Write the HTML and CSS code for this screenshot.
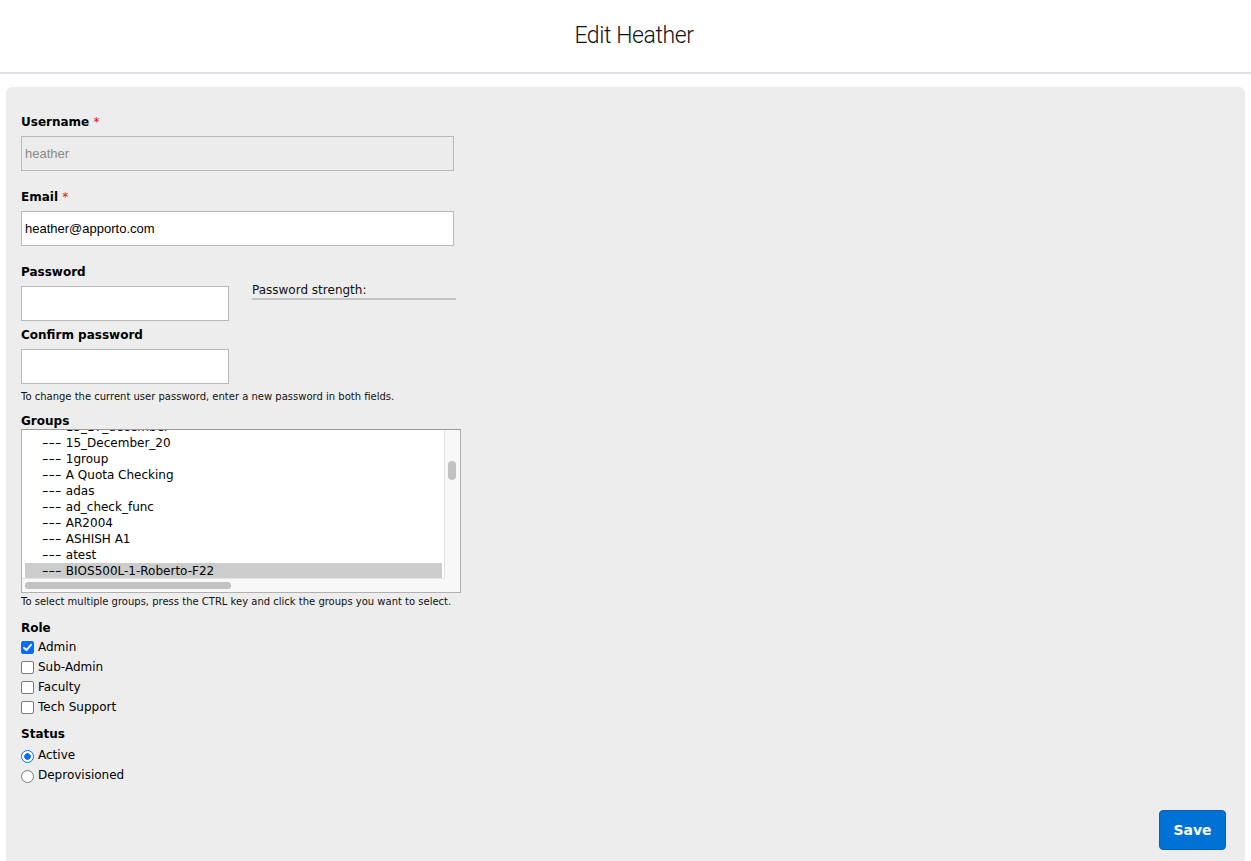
FILE: index.html
```html
<!DOCTYPE html>
<html lang="en">
<head>
<meta charset="utf-8">
<title>Edit Heather</title>
<link rel="stylesheet" href="styles.css">
</head>
<body>
<header class="topbar">
  <h1 class="title">Edit Heather</h1>
</header>
<main class="panel">
  <form class="form">
    <div class="field">
      <div class="label">Username <span class="req">*</span></div>
      <div class="input input-wide input-disabled">heather</div>
    </div>
    <div class="field">
      <div class="label">Email <span class="req">*</span></div>
      <div class="input input-wide">heather@apporto.com</div>
    </div>
    <div class="field field-pw">
      <div class="label">Password</div>
      <div class="pw-row">
        <div class="input input-short"></div>
        <div class="strength">
          <div class="strength-text">Password strength:</div>
          <div class="strength-bar"></div>
        </div>
      </div>
    </div>
    <div class="field field-confirm">
      <div class="label">Confirm password</div>
      <div class="input input-short"></div>
      <div class="help">To change the current user password, enter a new password in both fields.</div>
    </div>
    <div class="field field-groups">
      <div class="label label-tight">Groups</div>
      <div class="listbox">
        <div class="list">
          <div class="list-inner">
            <div class="opt opt-clipped"><span class="dash">---</span> 15_17_december</div>
            <div class="opt"><span class="dash">---</span> 15_December_20</div>
            <div class="opt"><span class="dash">---</span> 1group</div>
            <div class="opt"><span class="dash">---</span> A Quota Checking</div>
            <div class="opt"><span class="dash">---</span> adas</div>
            <div class="opt"><span class="dash">---</span> ad_check_func</div>
            <div class="opt"><span class="dash">---</span> AR2004</div>
            <div class="opt"><span class="dash">---</span> ASHISH A1</div>
            <div class="opt"><span class="dash">---</span> atest</div>
            <div class="opt opt-selected"><span class="dash">---</span> BIOS500L-1-Roberto-F22</div>
          </div>
        </div>
        <div class="vscroll"><div class="vthumb"></div></div>
        <div class="hscroll"><div class="hthumb"></div></div>
        <div class="corner"></div>
      </div>
      <div class="help">To select multiple groups, press the CTRL key and click the groups you want to select.</div>
    </div>
    <div class="field field-role">
      <div class="label label-opts">Role</div>
      <div class="opts">
        <div class="check-row"><span class="cb cb-on"><svg viewBox="0 0 13 13" width="13" height="13"><path d="M3 6.8 L5.4 9.2 L10 3.8" fill="none" stroke="#fff" stroke-width="1.9" stroke-linecap="round" stroke-linejoin="round"/></svg></span><span>Admin</span></div>
        <div class="check-row"><span class="cb"></span><span>Sub-Admin</span></div>
        <div class="check-row"><span class="cb"></span><span>Faculty</span></div>
        <div class="check-row"><span class="cb"></span><span>Tech Support</span></div>
      </div>
    </div>
    <div class="field field-status">
      <div class="label label-opts">Status</div>
      <div class="opts">
        <div class="check-row"><span class="rb rb-on"></span><span>Active</span></div>
        <div class="check-row"><span class="rb"></span><span>Deprovisioned</span></div>
      </div>
    </div>
    <div class="actions">
      <button type="button" class="btn-save">Save</button>
    </div>
  </form>
</main>
</body>
</html>
```
FILE: styles.css
```css
html, body {
  margin: 0;
  padding: 0;
  background: #ffffff;
}
body {
  font-family: "DejaVu Sans", "Noto Sans", sans-serif;
  color: #000;
}
.topbar {
  height: 72px;
  border-bottom: 2px solid #dde0e5;
  display: flex;
  align-items: center;
  justify-content: center;
  padding-left: 17px;
  box-sizing: content-box;
}
.title {
  margin: 0 0 2px 0;
  font-family: Roboto, "Liberation Sans", sans-serif;
  font-weight: 300;
  font-size: 23px;
  letter-spacing: -0.4px;
  color: #111;
}
.panel {
  margin: 13px 6px 0 6px;
  background: #ededed;
  border-radius: 6px 6px 0 0;
  padding: 27px 19px 11px 15px;
}
.form {
  display: flex;
  flex-direction: column;
}
.field {
  display: flex;
  flex-direction: column;
  margin-bottom: 18px;
}
.label {
  font-weight: bold;
  font-size: 12px;
  line-height: 16px;
  margin-bottom: 6px;
}
.label-tight {
  line-height: 15px;
  margin-bottom: 0;
}
.label-opts {
  line-height: 15px;
  margin-bottom: 1px;
}
.req {
  color: #e0101a;
  font-weight: normal;
}
.input {
  box-sizing: border-box;
  height: 35px;
  border: 1px solid #b9b9b9;
  background: #fff;
  font-family: "Liberation Sans", Arial, sans-serif;
  font-size: 13px;
  line-height: 33px;
  padding-left: 3px;
  color: #000;
}
.input-wide { width: 433px; }
.input-short { width: 208px; }
.input-disabled {
  background: #ececec;
  color: #8a8a8a;
}
.field-pw { margin-bottom: 6px; }
.pw-row {
  display: flex;
  align-items: flex-start;
  gap: 23px;
}
.strength {
  width: 204px;
  margin-top: -3px;
}
.strength-text {
  font-size: 12px;
  line-height: 14px;
  color: #111;
}
.strength-bar {
  height: 2px;
  background: #c4c4c4;
  margin-top: 1px;
}
.field-confirm { margin-bottom: 11px; }
.help {
  font-size: 10px;
  line-height: 13px;
  margin-top: 6px;
  color: #111;
  white-space: nowrap;
}
.field-groups { margin-bottom: 13px; }
.field-groups .help { margin-top: 2px; }
.listbox {
  position: relative;
  box-sizing: border-box;
  width: 440px;
  height: 164px;
  border: 1px solid #b0b0b0;
  border-top-color: #9a9a9a;
  background: #f8f8f8;
  display: grid;
  grid-template-columns: 423px 15px;
  grid-template-rows: 149px 13px;
}
.list {
  background: #fff;
  overflow: hidden;
  border-right: 1px solid #e3e3e3;
  border-bottom: 1px solid #e3e3e3;
}
.list-inner {
  margin-top: -11px;
  padding-left: 3px;
}
.opt {
  height: 16px;
  line-height: 16px;
  font-size: 12px;
  padding-left: 17px;
  width: 417px;
  box-sizing: border-box;
  white-space: nowrap;
}
.dash {
  display: inline-block;
  transform: scaleX(1.5);
  transform-origin: left center;
  margin-right: 7px;
}
.opt-selected {
  background: #cccccc;
}
.vscroll {
  background: #f8f8f8;
  position: relative;
}
.vthumb {
  position: absolute;
  left: 3px;
  top: 31px;
  width: 8px;
  height: 19px;
  border-radius: 4px;
  background: #c2c2c2;
}
.hscroll {
  background: #f8f8f8;
  position: relative;
}
.hthumb {
  position: absolute;
  left: 3px;
  top: 3px;
  width: 206px;
  height: 7px;
  border-radius: 4px;
  background: #c2c2c2;
}
.corner { background: #f8f8f8; }
.field-role { margin-bottom: 10px; }
.field-status .label-opts { margin-bottom: 3px; }
.opts {
  display: flex;
  flex-direction: column;
}
.check-row {
  height: 20px;
  display: flex;
  align-items: center;
  font-size: 12px;
  gap: 4px;
}
.cb {
  box-sizing: border-box;
  width: 13px;
  height: 13px;
  border: 1px solid #7a7a7a;
  border-radius: 2px;
  background: #fff;
  display: inline-flex;
}
.cb-on {
  background: #0b6df0;
  border-color: #0b6df0;
}
.cb-on svg { margin: -1px; }
.rb {
  box-sizing: border-box;
  width: 13px;
  height: 13px;
  border: 1px solid #7a7a7a;
  border-radius: 50%;
  background: #fff;
  margin-top: 2px;
}
.rb-on {
  border: 1.5px solid #0b6df0;
  background: radial-gradient(circle, #0b6df0 0 3px, #fff 3.5px);
}
.field-status { margin-bottom: 0; }
.actions {
  display: flex;
  justify-content: flex-end;
  margin-top: 25px;
}
.btn-save {
  width: 67px;
  height: 40px;
  border-radius: 4px;
  border: 1px solid #0b5fb4;
  background: #0072d6;
  color: #fff;
  font-family: "DejaVu Sans", sans-serif;
  font-weight: bold;
  font-size: 14px;
  padding: 0;
}
```
